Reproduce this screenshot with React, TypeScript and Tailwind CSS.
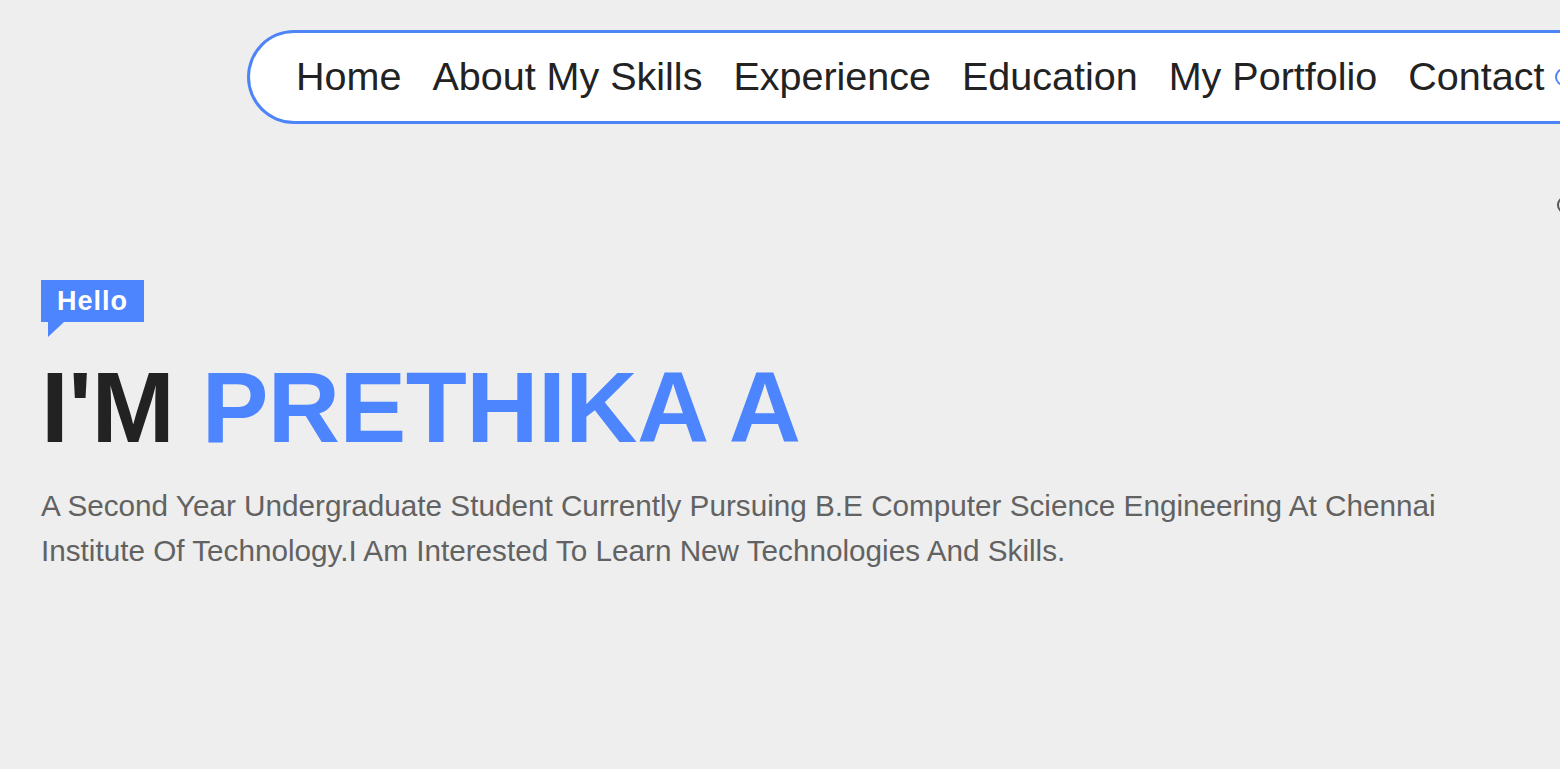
const links = ["Home", "About My Skills", "Experience", "Education", "My Portfolio", "Contact"]

export default function App() {
  return (
    <div className="min-h-[769px] w-full overflow-hidden bg-[#eeeeee] font-['Liberation_Sans',Arial,sans-serif]">
      <header className="pt-[30px] pl-[247px]">
        <nav className="flex h-[94px] w-[1400px] items-center gap-[31px] rounded-l-full border-[3px] border-r-0 border-[#4d84f8] bg-white pl-[46px]">
          {links.map((l) => (
            <a key={l} href="#" className="whitespace-nowrap pb-[1px] text-[39.5px] leading-none text-[#222222]">
              {l}
            </a>
          ))}
          <span className="ml-[-20px] h-[18px] w-[18px] shrink-0 rounded-full border-2 border-[#4d84f8]" />
        </nav>
      </header>

      <div className="relative">
        <span className="absolute left-[1557px] top-[72px] h-[18px] w-[18px] rounded-full border-2 border-[#555]" />
      </div>

      <main className="px-[41px] pt-[156px]">
        <div className="relative inline-block bg-[#4d85ff] px-[16px] py-[5px] text-[27px] font-bold leading-[32px] tracking-[1px] text-white">
          Hello
          <span className="absolute left-[7px] top-full h-0 w-0 border-r-[16px] border-t-[15px] border-r-transparent border-t-[#4d85ff]" />
        </div>
        <h1 className="mt-[30px] text-[100px] font-bold leading-[110px] tracking-[-0.5px] text-[#222222]">
          I'M <span className="text-[#4d85ff]">PRETHIKA A</span>
        </h1>
        <p className="mt-[21px] max-w-[1440px] text-[29.7px] leading-[45px] text-[#626262]">
          A Second Year Undergraduate Student Currently Pursuing B.E Computer Science Engineering At Chennai Institute Of Technology.I Am Interested To Learn New Technologies And Skills.
        </p>
      </main>
    </div>
  )
}
